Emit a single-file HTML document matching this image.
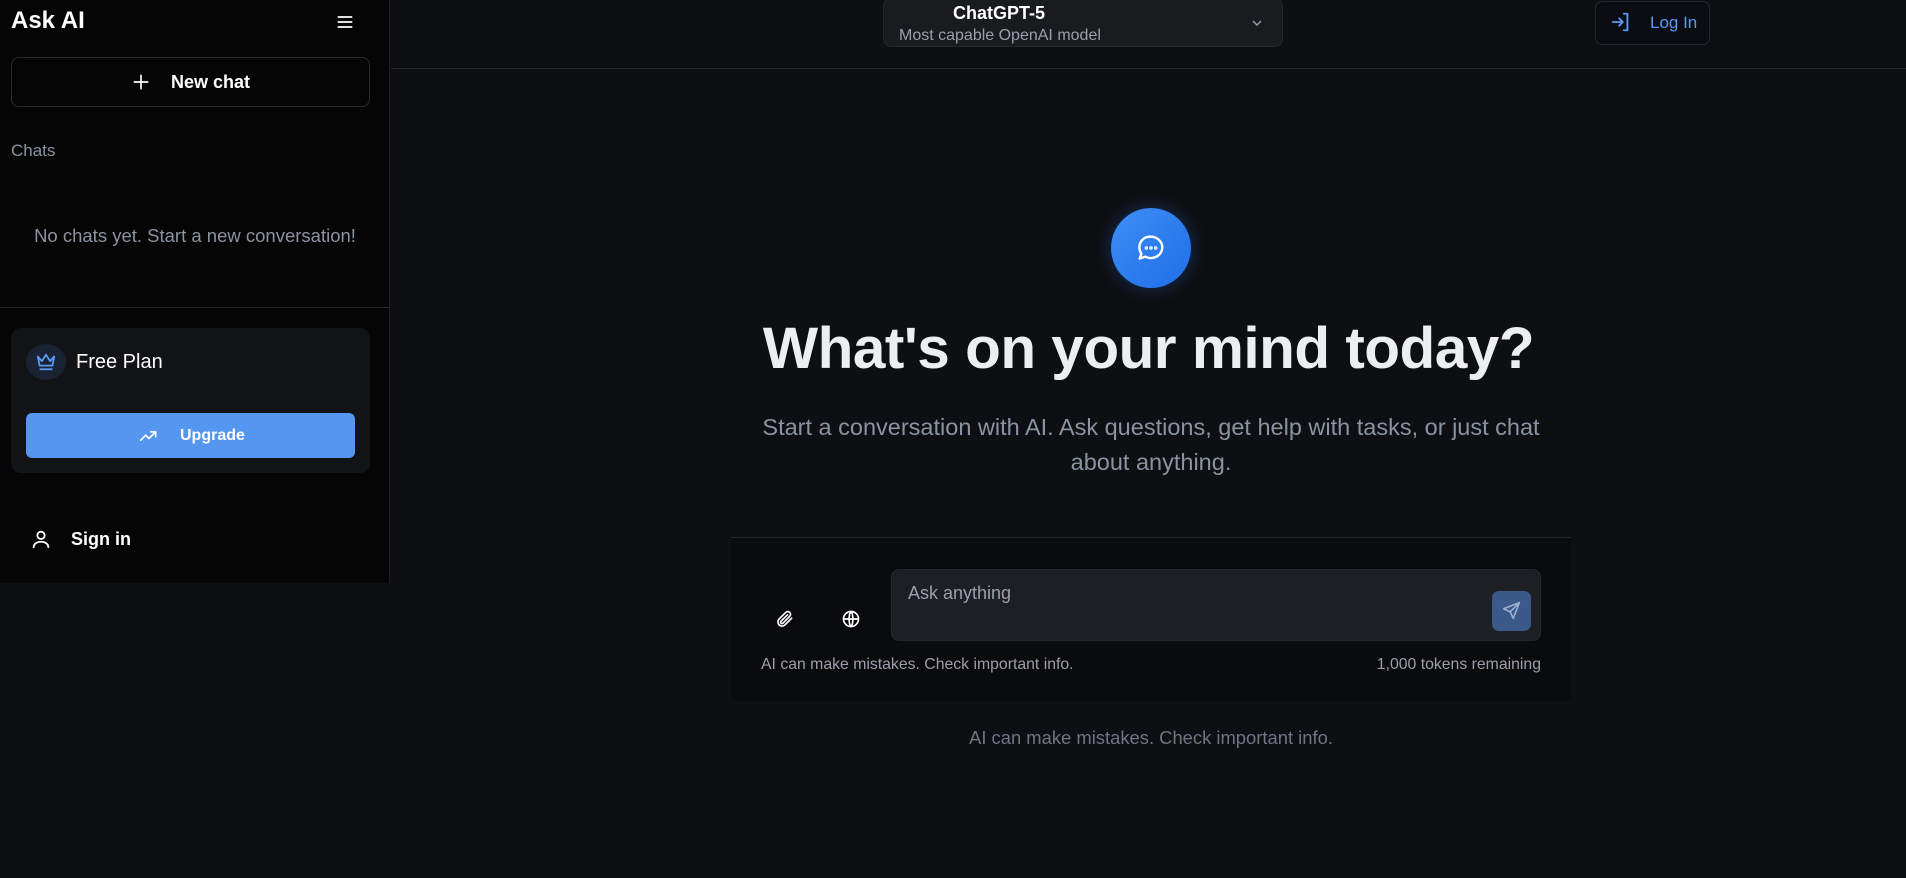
<!DOCTYPE html>
<html><head><meta charset="utf-8"><style>
*{box-sizing:border-box;margin:0;padding:0}
body{width:1906px;height:878px;background:#0e0f12;font-family:"Liberation Sans",sans-serif;position:relative;overflow:hidden;color:#fff}
.a{position:absolute}
svg{display:block}
</style></head><body>
<div class="a" style="left:0;top:0;width:390px;height:583px;background:#050505;border-right:1px solid #1c1d21"></div>
<div class="a" style="left:11px;top:7px;font-size:24px;font-weight:bold">Ask AI</div>
<svg class="a" style="left:335px;top:12px" width="20" height="20" viewBox="0 0 24 24" fill="none" stroke="#fff" stroke-width="2" stroke-linecap="round"><path d="M4 6h16M4 12h16M4 18h16"/></svg>
<div class="a" style="left:11px;top:57px;width:359px;height:50px;border:1px solid #2a2b30;border-radius:8px"></div>
<svg class="a" style="left:131px;top:72px" width="20" height="20" viewBox="0 0 24 24" fill="none" stroke="#fff" stroke-width="2" stroke-linecap="round"><path d="M12 4v16M4 12h16"/></svg>
<div class="a" style="left:171px;top:72px;font-size:18px;font-weight:bold">New chat</div>
<div class="a" style="left:11px;top:141px;font-size:17px;color:#8b93a3">Chats</div>
<div class="a" style="left:0;width:390px;top:225px;text-align:center;font-size:18.5px;color:#8b93a3">No chats yet. Start a new conversation!</div>
<div class="a" style="left:0;top:307px;width:390px;height:1px;background:#26272c"></div>
<div class="a" style="left:11px;top:328px;width:359px;height:145px;background:#121317;border-radius:10px"></div>
<div class="a" style="left:26px;top:344px;width:40px;height:36px;border-radius:50%;background:#1a2333"></div>
<svg class="a" style="left:35px;top:352px" width="22" height="20" viewBox="0 0 24 22" fill="none" stroke="#5a9af5" stroke-width="2" stroke-linejoin="round"><path d="M3 5l4.5 5L12 3l4.5 7L21 5l-2 10H5z"/><path d="M5 19h14"/></svg>
<div class="a" style="left:76px;top:351px;font-size:20px">Free Plan</div>
<div class="a" style="left:26px;top:413px;width:329px;height:45px;background:#5596f0;border-radius:6px"></div>
<svg class="a" style="left:139px;top:426px" width="20" height="20" viewBox="0 0 24 24" fill="none" stroke="#fff" stroke-width="2" stroke-linecap="round" stroke-linejoin="round"><path d="M2 17l6-6 4 4 8-8M14 7h6v6"/></svg>
<div class="a" style="left:180px;top:427px;font-size:16px;font-weight:bold">Upgrade</div>
<svg class="a" style="left:30px;top:528px" width="22" height="22" viewBox="0 0 24 24" fill="none" stroke="#fff" stroke-width="2" stroke-linecap="round"><circle cx="12" cy="8" r="4"/><path d="M4 21c0-4 4-6 8-6s8 2 8 6"/></svg>
<div class="a" style="left:71px;top:529px;font-size:18px;font-weight:bold">Sign in</div>

<div class="a" style="left:391px;top:68px;width:1515px;height:1px;background:#23242a"></div>
<div class="a" style="left:883px;top:-2px;width:400px;height:49px;background:#1a1b1f;border:1px solid #24262b;border-radius:8px"></div>
<div class="a" style="left:883px;width:232px;top:3px;text-align:center;font-size:18px;font-weight:bold">ChatGPT-5</div>
<div class="a" style="left:899px;top:27px;font-size:16px;color:#9aa0aa">Most capable OpenAI model</div>
<svg class="a" style="left:1249px;top:15px" width="16" height="16" viewBox="0 0 24 24" fill="none" stroke="#9aa0aa" stroke-width="2"><path d="M6 9l6 6 6-6"/></svg>
<div class="a" style="left:1595px;top:1px;width:115px;height:44px;background:#0b0d12;border:1px solid #24272e;border-radius:7px"></div>
<svg class="a" style="left:1610px;top:11px" width="22" height="22" viewBox="0 0 24 24" fill="none" stroke="#5a9af5" stroke-width="2" stroke-linecap="round" stroke-linejoin="round"><path d="M15 3h4v18h-4M3 12h11M10 8l4 4-4 4"/></svg>
<div class="a" style="left:1650px;top:13px;font-size:17px;color:#5a9af5">Log In</div>

<div class="a" style="left:1111px;top:208px;width:80px;height:80px;border-radius:50%;background:linear-gradient(135deg,#3e8df5,#1f6fe8);box-shadow:0 0 18px rgba(40,110,230,0.35)"></div>
<svg class="a" style="left:1135px;top:232px" width="32" height="32" viewBox="0 0 24 24" fill="none" stroke="#fff" stroke-width="1.8" stroke-linejoin="round"><path d="M12 3.5a8.5 8 0 1 1-4.2 15L3.5 20l1.3-3.8A8 8 0 0 1 12 3.5z"/><circle cx="8.5" cy="12" r=".4" fill="#fff"/><circle cx="12" cy="12" r=".4" fill="#fff"/><circle cx="15.5" cy="12" r=".4" fill="#fff"/></svg>
<div class="a" style="left:391px;width:1515px;top:315px;text-align:center;font-size:58.5px;font-weight:bold;color:#eceef1;letter-spacing:-0.5px">What's on your mind today?</div>
<div class="a" style="left:730px;width:842px;top:410px;text-align:center;font-size:23.5px;line-height:35px;color:#8b93a3;padding:0 20px">Start a conversation with AI. Ask questions, get help with tasks, or just chat about anything.</div>

<div class="a" style="left:731px;top:537px;width:840px;height:164px;background:#0a0b0d;border-top:1px solid #23242a"></div>
<svg class="a" style="left:775px;top:609px" width="20" height="20" viewBox="0 0 24 24" fill="none" stroke="#fff" stroke-width="2" stroke-linecap="round"><path d="M20 11l-8.5 8.5a5 5 0 0 1-7-7L13 4a3.3 3.3 0 0 1 4.7 4.7L9.5 17a1.6 1.6 0 0 1-2.3-2.3L15 7"/></svg>
<svg class="a" style="left:841px;top:609px" width="20" height="20" viewBox="0 0 24 24" fill="none" stroke="#fff" stroke-width="2"><circle cx="12" cy="12" r="9"/><path d="M3 12h18M12 3c3 3 3 15 0 18M12 3c-3 3-3 15 0 18"/></svg>
<div class="a" style="left:891px;top:569px;width:650px;height:72px;background:#1d1f24;border:1px solid #25272c;border-radius:8px"></div>
<div class="a" style="left:908px;top:583px;font-size:18px;color:#9aa0aa">Ask anything</div>
<div class="a" style="left:1492px;top:591px;width:39px;height:40px;background:#3b5a8a;border-radius:7px"></div>
<svg class="a" style="left:1501px;top:600px" width="21" height="21" viewBox="0 0 24 24" fill="none" stroke="#9fb3d0" stroke-width="1.8" stroke-linejoin="round"><path d="M21 3L3 10l7.5 3.5L14 21z M10.5 13.5L21 3"/></svg>
<div class="a" style="left:761px;top:656px;font-size:15.8px;color:#9aa0aa">AI can make mistakes. Check important info.</div>
<div class="a" style="left:1300px;width:241px;top:656px;text-align:right;font-size:15.8px;color:#9aa0aa">1,000 tokens remaining</div>
<div class="a" style="left:731px;width:840px;top:727px;text-align:center;font-size:18.4px;color:#6f7582">AI can make mistakes. Check important info.</div>
</body></html>
